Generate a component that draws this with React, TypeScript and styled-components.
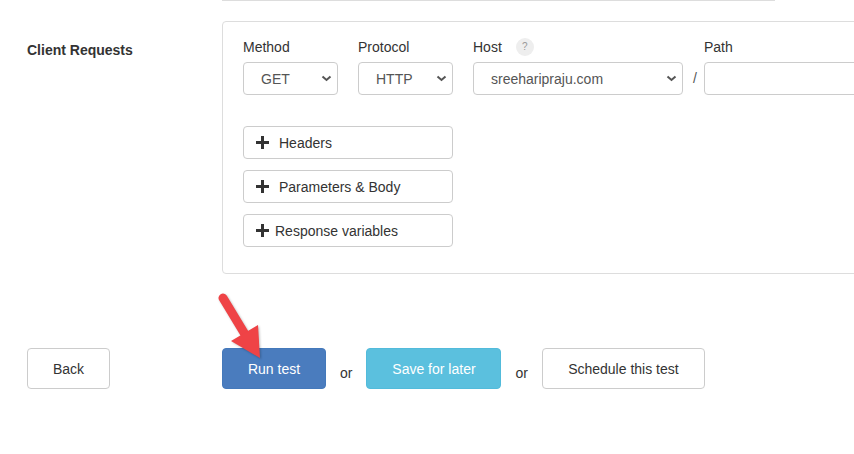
import React from "react";
import styled, { createGlobalStyle } from "styled-components";

const Global = createGlobalStyle`
  html, body { margin: 0; padding: 0; background: #fff; overflow: hidden; }
  body { font-family: "Liberation Sans", Arial, sans-serif; font-size: 14px; color: #333; }
  * { box-sizing: border-box; }
`;

const Page = styled.div`
  position: relative;
  width: 854px;
  height: 454px;
  overflow: hidden;
`;

const PrevPanelEdge = styled.div`
  margin-left: 222px;
  width: 553px;
  height: 1px;
  background: #ddd;
`;

const Section = styled.div`
  display: grid;
  grid-template-columns: 222px 1fr;
  margin-top: 20px;
`;

const SectionLabel = styled.div`
  padding: 19px 0 0 27px;
  font-weight: bold;
  font-size: 14px;
  line-height: 20px;
  color: #333;
`;

const Panel = styled.div`
  width: 680px;
  border: 1px solid #ddd;
  border-radius: 4px;
  padding: 15px 20px 26px 20px;
`;

const FieldsRow = styled.div`
  display: flex;
  align-items: flex-end;
  gap: 20px;
`;

const Field = styled.div<{ $w: number }>`
  display: flex;
  flex-direction: column;
  width: ${(p) => p.$w}px;
  flex: none;
`;

const FieldLabel = styled.div`
  display: flex;
  align-items: center;
  height: 20px;
  margin-bottom: 5px;
  line-height: 20px;
  color: #333;
`;

const HelpBadge = styled.span`
  display: inline-flex;
  align-items: center;
  justify-content: center;
  width: 18px;
  height: 18px;
  margin-left: 14px;
  border-radius: 50%;
  background: #eee;
  color: #999;
  font-size: 10px;
  line-height: 1;
`;

const SelectBox = styled.div`
  display: flex;
  align-items: center;
  justify-content: space-between;
  height: 33px;
  padding: 0 5px 0 17px;
  border: 1px solid #ccc;
  border-radius: 4px;
  color: #555;
  background: #fff;
`;

const TextInput = styled.div`
  height: 33px;
  border: 1px solid #ccc;
  border-radius: 4px;
  background: #fff;
`;

const Slash = styled.span`
  height: 33px;
  line-height: 33px;
  margin: 0 -13px 0 -10px;
  color: #555;
`;

const Toggles = styled.div`
  display: flex;
  flex-direction: column;
  gap: 11px;
  margin-top: 31px;
`;

const ToggleButton = styled.div<{ $tight?: boolean }>`
  display: flex;
  align-items: center;
  gap: ${(p) => (p.$tight ? 6 : 10)}px;
  width: 210px;
  height: 33px;
  padding-left: 12px;
  border: 1px solid #ccc;
  border-radius: 4px;
  color: #333;
  background: #fff;
`;

const Actions = styled.div`
  display: grid;
  grid-template-columns: 222px 1fr;
  margin-top: 74px;
`;

const ActionsLeft = styled.div`
  padding-left: 27px;
`;

const ActionsMain = styled.div`
  display: flex;
  align-items: center;
  gap: 14px;
`;

const Button = styled.div<{ $w: number; $variant?: "primary" | "info" | "default" }>`
  display: flex;
  align-items: center;
  justify-content: center;
  width: ${(p) => p.$w}px;
  height: 41px;
  border-radius: 4px;
  border: 1px solid
    ${(p) => (p.$variant === "primary" ? "#4479bb" : p.$variant === "info" ? "#52bbdb" : "#ccc")};
  background: ${(p) => (p.$variant === "primary" ? "#4a7cbe" : p.$variant === "info" ? "#5bc0de" : "#fff")};
  color: ${(p) => (p.$variant && p.$variant !== "default" ? "#fff" : "#333")};
  font-size: 14px;
`;

const Or = styled.span`
  margin-top: 9px;
  color: #333;
`;

const ArrowSvg = styled.svg`
  position: absolute;
  left: 210px;
  top: 285px;
  width: 60px;
  height: 80px;
  filter: drop-shadow(1px 1px 1px rgba(0, 0, 0, 0.25));
`;

const Chevron = () => (
  <svg width="11" height="7" viewBox="0 0 11 7">
    <path d="M1.5 1.5 L5.5 5 L9.5 1.5" fill="none" stroke="#555" strokeWidth="2" />
  </svg>
);

const Plus = () => (
  <svg width="13" height="13" viewBox="0 0 13 13">
    <path d="M6.5 0 V13 M0 6.5 H13" stroke="#333" strokeWidth="3" />
  </svg>
);

export default function App() {
  return (
    <Page>
      <Global />
      <PrevPanelEdge />
      <Section>
        <SectionLabel>Client Requests</SectionLabel>
        <Panel>
          <FieldsRow>
            <Field $w={95}>
              <FieldLabel>Method</FieldLabel>
              <SelectBox>
                <span>GET</span>
                <Chevron />
              </SelectBox>
            </Field>
            <Field $w={95}>
              <FieldLabel>Protocol</FieldLabel>
              <SelectBox>
                <span>HTTP</span>
                <Chevron />
              </SelectBox>
            </Field>
            <Field $w={210}>
              <FieldLabel>
                Host <HelpBadge>?</HelpBadge>
              </FieldLabel>
              <SelectBox>
                <span>sreeharipraju.com</span>
                <Chevron />
              </SelectBox>
            </Field>
            <Slash>/</Slash>
            <Field $w={200}>
              <FieldLabel>Path</FieldLabel>
              <TextInput />
            </Field>
          </FieldsRow>
          <Toggles>
            <ToggleButton>
              <Plus />
              <span>Headers</span>
            </ToggleButton>
            <ToggleButton>
              <Plus />
              <span>Parameters &amp; Body</span>
            </ToggleButton>
            <ToggleButton $tight>
              <Plus />
              <span>Response variables</span>
            </ToggleButton>
          </Toggles>
        </Panel>
      </Section>
      <Actions>
        <ActionsLeft>
          <Button $w={83}>Back</Button>
        </ActionsLeft>
        <ActionsMain>
          <Button $w={104} $variant="primary">Run test</Button>
          <Or>or</Or>
          <Button $w={135} $variant="info">Save for later</Button>
          <Or>or</Or>
          <Button $w={163}>Schedule this test</Button>
        </ActionsMain>
      </Actions>
      <ArrowSvg viewBox="210 285 60 80">
        <line x1="223" y1="298" x2="246" y2="336" stroke="#ef4346" strokeWidth="9" strokeLinecap="round" />
        <polygon points="231,341 258,325 260,358" fill="#ef4346" />
      </ArrowSvg>
    </Page>
  );
}
